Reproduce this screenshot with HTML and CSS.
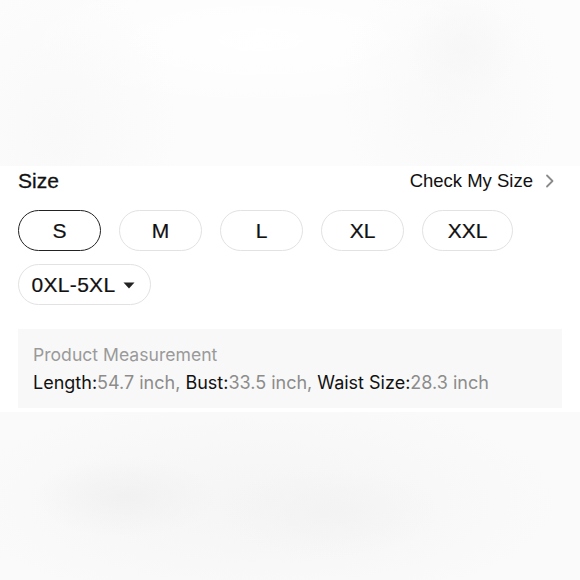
FILE: index.html
```html
<!DOCTYPE html>
<html>
<head>
<meta charset="utf-8">
<link rel="stylesheet" href="styles.css">
</head>
<body>
<div class="hero"></div>
<section class="size-section">
  <div class="size-head">
    <span class="size-title">Size</span>
    <span class="check">Check My Size
      <svg class="chev" width="10" height="14" viewBox="0 0 10 14"><path d="M2 1.5 L7.5 7 L2 12.5" fill="none" stroke="#8a8a8a" stroke-width="1.8" stroke-linecap="round" stroke-linejoin="round"/></svg>
    </span>
  </div>
  <div class="pills">
    <div class="pill active">S</div>
    <div class="pill">M</div>
    <div class="pill">L</div>
    <div class="pill">XL</div>
    <div class="pill wide">XXL</div>
  </div>
  <div class="pills second">
    <div class="pill range"><span class="range-text">0XL-5XL</span>
      <svg class="caret" width="12" height="7" viewBox="0 0 12 7"><path d="M0.5 0.5 H11.5 L6 6.5 Z" fill="#222"/></svg>
    </div>
  </div>
  <div class="measure">
    <div class="m-title">Product Measurement</div>
    <div class="m-line"><span class="k">Length:</span><span class="v">54.7 inch, </span><span class="k">Bust:</span><span class="v">33.5 inch, </span><span class="k">Waist Size:</span><span class="v">28.3 inch</span></div>
  </div>
</section>
<div class="footer"></div>
</body>
</html>
```

FILE: styles.css
```css
html, body {
  margin: 0;
  padding: 0;
  background: #ffffff;
  width: 580px;
  overflow: hidden;
}
body {
  font-family: "Liberation Sans", Arial, sans-serif;
  color: #111;
}
.hero {
  height: 166px;
  background:
    radial-gradient(ellipse 55px 55px at 462px 50px, #f7f7f7 0%, rgba(247,247,247,0) 100%),
    radial-gradient(ellipse 110px 140px at 450px 100px, #f9f9f9 0%, rgba(249,249,249,0) 100%),
    radial-gradient(ellipse 120px 150px at 60px 130px, #f9f9f9 0%, rgba(249,249,249,0) 100%),
    radial-gradient(ellipse 260px 70px at 260px 40px, #ffffff 0%, rgba(255,255,255,0) 100%),
    #fcfcfc;
}
.size-section {
  padding: 0 18px;
  background: #fff;
  height: 246px;
  box-sizing: border-box;
}
.size-head {
  display: flex;
  justify-content: space-between;
  align-items: center;
  height: 30px;
}
.size-title {
  font-size: 21px;
  color: #111;
  -webkit-text-stroke: 0.3px #111;
}
.check {
  font-size: 18.5px;
  color: #111;
  display: flex;
  align-items: center;
  gap: 12px;
  margin-right: 7px;
}
.chev { display: block; }
.pills {
  display: flex;
  gap: 18px;
  margin-top: 14px;
}
.pills.second { margin-top: 13px; }
.pill {
  box-sizing: border-box;
  width: 83px;
  height: 41px;
  border: 1.5px solid #e2e2e2;
  border-radius: 21px;
  display: flex;
  align-items: center;
  justify-content: center;
  font-size: 21px;
  color: #111;
  -webkit-text-stroke: 0.2px #111;
}
.pill.active { border-color: #222; }
.pill.wide { width: 91px; }
.pill.range {
  width: 133px;
  gap: 8px;
  padding-right: 2px;
}
.range-text { letter-spacing: 0.3px; }
.caret { display: block; margin-top: 1px; }
.measure {
  margin-top: 24px;
  width: 544px;
  height: 79px;
  box-sizing: border-box;
  background: #f8f8f8;
  padding: 12px 15px 0;
  font-family: Inter, "Liberation Sans", sans-serif;
  font-size: 18px;
}
.m-title {
  color: #9a9a9a;
  font-size: 17.6px;
  line-height: 28px;
}
.m-line {
  line-height: 28px;
}
.k { color: #111; }
.v { color: #8c8c8c; }
.footer {
  height: 168px;
  background:
    radial-gradient(ellipse 90px 40px at 125px 85px, #f1f1f1 0%, rgba(241,241,241,0) 100%),
    radial-gradient(ellipse 110px 45px at 330px 100px, #f3f3f3 0%, rgba(243,243,243,0) 100%),
    radial-gradient(ellipse 300px 110px at 260px 90px, #f5f5f5 0%, rgba(245,245,245,0) 100%),
    #fafafa;
}
```
